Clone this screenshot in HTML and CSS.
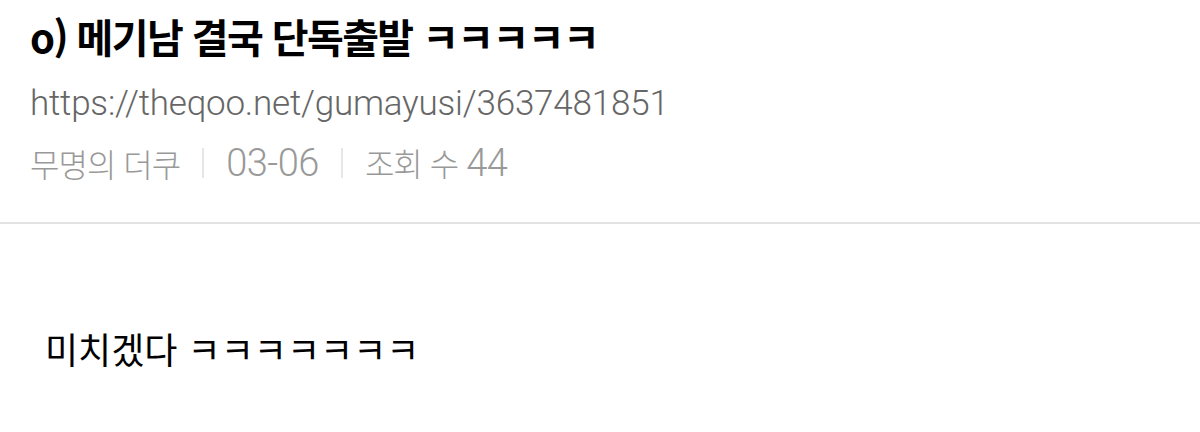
FILE: index.html
```html
<!DOCTYPE html>
<html lang="ko">
<head>
    <meta charset="UTF-8">
    <meta name="viewport" content="width=device-width, initial-scale=1.0">
    <title>메기남 결국 단독출발</title>
    <link rel="stylesheet" href="styles.css">
</head>
<body>
    <!-- Post header -->
    <div class="post-header">
        <h1 class="post-title">o) 메기남 결국 단독출발 ㅋㅋㅋㅋㅋ</h1>
        <div class="post-url">https://theqoo.net/gumayusi/3637481851</div>
        <div class="post-meta">
            <span>무명의 더쿠</span>
            <span class="sep"></span>
            <span class="num">03-06</span>
            <span class="sep"></span>
            <span>조회 수 <span class="num">44</span></span>
        </div>
    </div>

    <!-- Post body -->
    <div class="post-body">
        <p>미치겠다 ㅋㅋㅋㅋㅋㅋㅋ</p>
    </div>
</body>
</html>
```

FILE: styles.css
```css
/* Basic styling */
body {
    font-family: "Noto Sans CJK KR", "Noto Sans", sans-serif;
    margin: 0;
    padding: 0;
    background-color: #fff;
    color: #000;
}

/* Header */
.post-header {
    padding: 10px 30px 39px;
    border-bottom: 2px solid #e2e2e2;
}
.post-title {
    margin: 0;
    font-size: 40px;
    font-weight: 700;
    line-height: 52px;
    letter-spacing: -1.6px;
}
.post-url {
    margin-top: 22px;
    font-family: Roboto, "Noto Sans CJK KR", sans-serif;
    font-weight: 300;
    font-size: 35px;
    line-height: 40px;
    letter-spacing: -0.2px;
    color: #666;
}
.post-meta {
    display: flex;
    align-items: center;
    margin-top: 18px;
    font-size: 32px;
    font-weight: 300;
    line-height: 40px;
    color: #999;
    letter-spacing: -1px;
}
.post-meta .num {
    font-family: Roboto, sans-serif;
    font-weight: 300;
    font-size: 38px;
    letter-spacing: -0.5px;
}
.sep {
    width: 2px;
    height: 30px;
    margin: 0 22px;
    background-color: #e6e6e6;
}

/* Body */
.post-body {
    padding: 99px 45px 0;
}
.post-body p {
    margin: 0;
    font-size: 36px;
    line-height: 50px;
}
```
